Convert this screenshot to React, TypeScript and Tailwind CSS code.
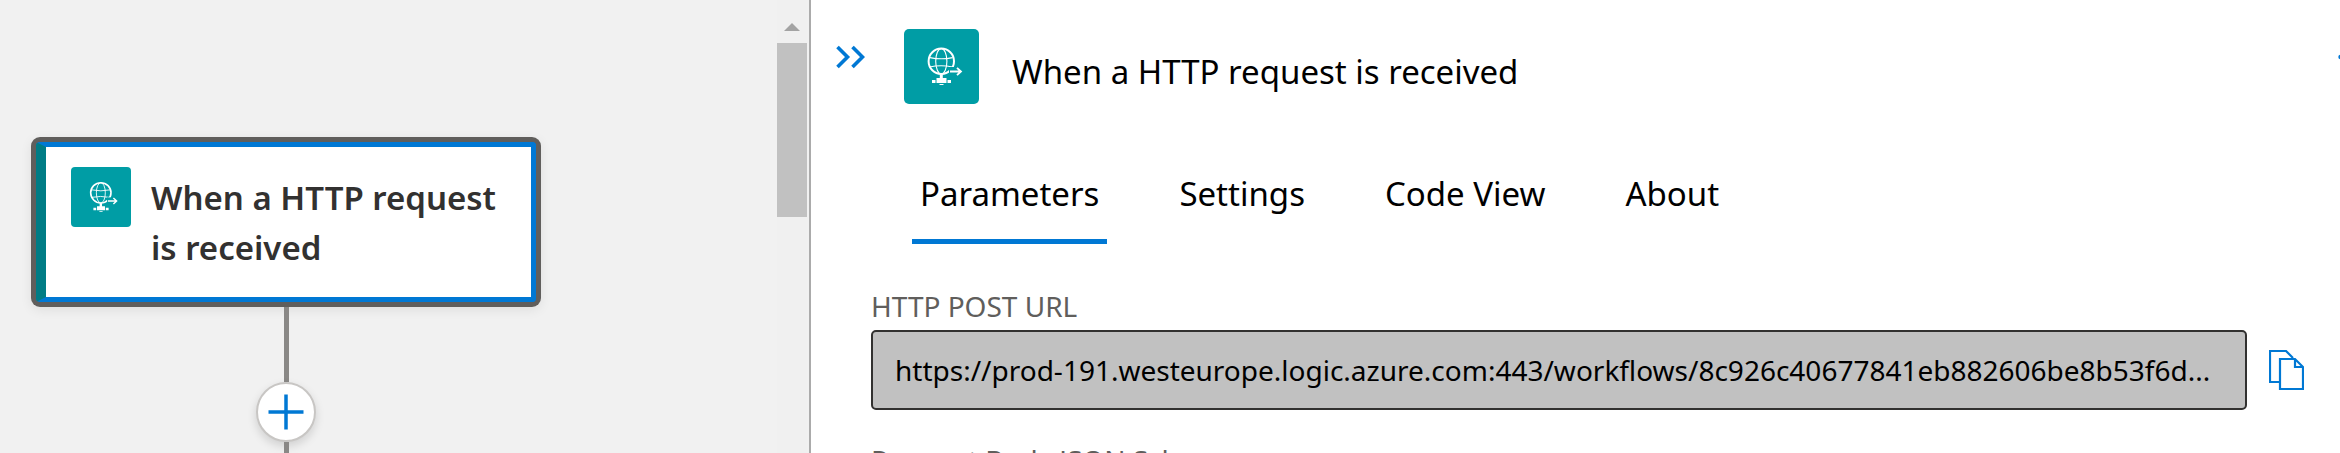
import { useState } from "react";

const tabs = ["Parameters", "Settings", "Code View", "About"];

function RequestIcon({ className }: { className: string }) {
  return (
    <svg viewBox="0 0 75 75" className={className} aria-hidden="true">
      <rect width="75" height="75" rx="5" fill="#009da5" />
      <g fill="none" stroke="#fff">
        <circle cx="37.3" cy="32.3" r="12.7" strokeWidth="2" />
        <ellipse cx="37.3" cy="32.3" rx="5.6" ry="12.7" strokeWidth="1.1" />
        <path d="M26 28.6q11.300 2.400 22.600 0M25.500 38q11.500-2.400 23 0" strokeWidth="1.100" />
        <path d="M37.300 45v5" strokeWidth="3" />
      </g>
      <path d="M45 38h15v9h-15z" fill="#009da5" />
      <path d="M46 42.500h11M53 38.800l4 3.700-4 3.700" fill="none" stroke="#fff" strokeWidth="1.800" />
      <path d="M32.500 49h10v5h-10zM28 51h3.500v3H28zM43.500 51H47v3h-3.500zM35.500 55h4v1h-4z" fill="#fff" />
    </svg>
  );
}

function Canvas() {
  return (
    <section aria-label="Designer" className="flex min-w-0 flex-1 flex-col items-start bg-[#f1f1f1] pl-[31px] pt-[137px]">
      <div className="flex w-[510px] shrink-0 flex-col items-center">
        <div className="w-full rounded-[9px] bg-[#605e5c] p-[5px] shadow-[0_3px_12px_rgba(0,0,0,0.08)]">
          <div className="flex h-40 items-start gap-[20px] rounded-[4px] border-[5px] border-l-[10px] border-[#0078d4] border-l-[#007c85] bg-white pl-[25px] pt-5">
            <RequestIcon className="size-[60px] shrink-0" />
            <h2 className="pt-[6px] text-[33px] font-semibold leading-[50px] text-[#323130]">
              When a HTTP request
              <br />
              is received
            </h2>
          </div>
        </div>
        <div className="h-[75px] w-[5px] bg-[#8a8886]" />
        <button
          type="button"
          aria-label="Insert a new step"
          className="flex size-[60px] shrink-0 items-center justify-center rounded-full border-2 border-[#c8c6c4] bg-white shadow-[0_4px_10px_rgba(0,0,0,0.14)]"
        >
          <svg viewBox="0 0 36 36" className="size-9" fill="none" stroke="#0078d4" strokeWidth="3.500" aria-hidden="true">
            <path d="M18 .5v35M.5 18h35" />
          </svg>
        </button>
        <div className="h-20 w-[5px] bg-[#8a8886]" />
      </div>
    </section>
  );
}

function ScrollBar() {
  return (
    <div aria-hidden="true" className="flex w-[30px] shrink-0 flex-col items-center bg-[#f0f0f0] pt-[23px]">
      <svg viewBox="0 0 16 8" className="h-2 w-4" fill="#a3a3a3">
        <path d="M8 0l8 8H0z" />
      </svg>
      <div className="mt-3 h-[174px] w-full bg-[#c1c1c1]" />
    </div>
  );
}

function Panel() {
  const [active, setActive] = useState("Parameters");
  return (
    <aside className="min-w-0 flex-1 overflow-hidden bg-white text-black">
      <header className="flex items-start pt-[29px]">
        <button type="button" aria-label="Collapse panel" className="ml-[25px] mt-[16px] shrink-0">
          <svg viewBox="0 0 29 24" className="h-6 w-[29px]" fill="none" stroke="#0078d4" strokeWidth="3.600" aria-hidden="true">
            <path d="M1.500 2L11.500 12 1.500 22M16.500 2l10 10-10 10" />
          </svg>
        </button>
        <RequestIcon className="ml-[39px] size-[75px] shrink-0" />
        <h1 className="ml-[33px] mt-[18px] flex-1 text-[33px] leading-[50px]">When a HTTP request is received</h1>
        <button type="button" aria-label="More commands" className="-mr-[26px] mt-[24px] shrink-0">
          <svg viewBox="0 0 28 8" className="h-2 w-7" fill="#0078d4" aria-hidden="true">
            <circle cx="2.500" cy="4" r="2.200" />
            <circle cx="14" cy="4" r="2.200" />
            <circle cx="25.500" cy="4" r="2.200" />
          </svg>
        </button>
      </header>
      <div role="tablist" className="ml-[101px] mt-[65px] flex gap-16">
        {tabs.map((tab) => (
          <button
            key={tab}
            type="button"
            role="tab"
            aria-selected={active === tab}
            onClick={() => setActive(tab)}
            className={
              active === tab
                ? "h-[75px] border-b-[5px] border-[#0078d4] px-2 pb-5 text-[33px] leading-[50px]"
                : "h-[75px] border-b-[5px] border-transparent px-2 pb-5 text-[33px] leading-[50px]"
            }
          >
            {tab}
          </button>
        ))}
      </div>
      <div className="pl-[60px] pr-[36px] pt-[42px] text-[28px] leading-[40px] text-[#605e5c]">
        <label htmlFor="post-url" className="block">
          HTTP POST URL
        </label>
        <div className="mt-1 flex items-center gap-[22px]">
          <input
            id="post-url"
            readOnly
            defaultValue="https://prod-191.westeurope.logic.azure.com:443/workflows/8c926c40677841eb882606be8b53f6d..."
            className="h-20 min-w-0 flex-1 rounded-[5px] border-2 border-[#323130] bg-[#c1c1c1] px-[22px] text-[28px] text-black"
          />
          <button type="button" aria-label="Copy URL" className="shrink-0">
            <svg viewBox="0 0 35 40" className="h-10 w-[35px]" fill="none" stroke="#0078d4" strokeWidth="2.200" aria-hidden="true">
              <path d="M11 32H1V1h16l7 7M11 9h15l8 8v22H11zM26 9v8h8" />
            </svg>
          </button>
        </div>
        <label htmlFor="schema" className="mt-[30px] block">
          Request Body JSON Schema
        </label>
        <textarea id="schema" className="mt-1 h-40 w-full border-2 border-[#323130]" />
      </div>
    </aside>
  );
}

export default function App() {
  return (
    <main className="flex h-screen overflow-hidden font-['Noto_Sans','Open_Sans',sans-serif]">
      <div className="flex w-[811px] shrink-0 border-r-2 border-[#ababab] bg-[#f1f1f1] pr-[2px]">
        <Canvas />
        <ScrollBar />
      </div>
      <Panel />
    </main>
  );
}
